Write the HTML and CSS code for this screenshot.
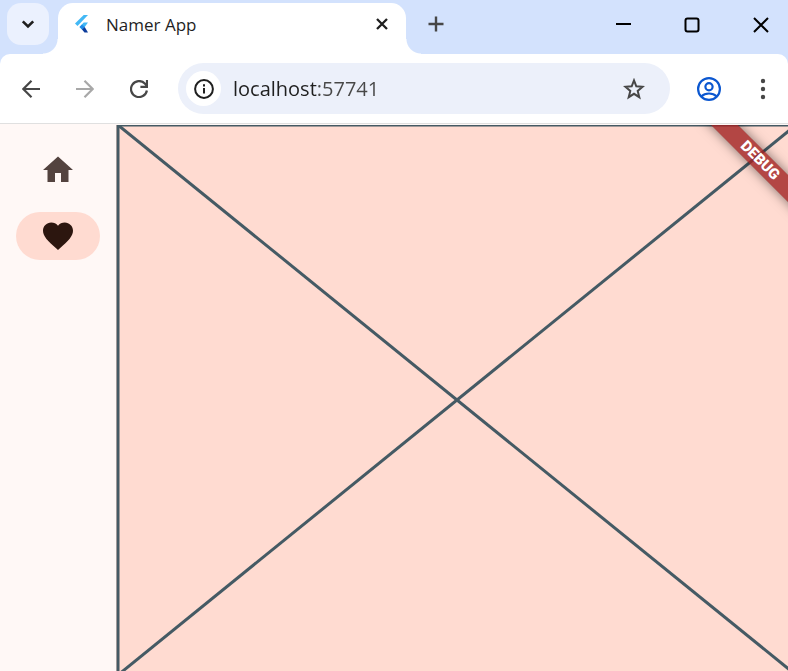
FILE: index.html
```html
<!DOCTYPE html>
<html lang="en">
<head>
<meta charset="utf-8">
<meta name="viewport" content="width=device-width, initial-scale=1">
<title>Namer App</title>
<link rel="stylesheet" href="styles.css">
</head>
<body>
<header class="tabstrip">
  <button class="tab-search" aria-label="Search tabs">
    <svg width="14" height="14" viewBox="0 0 14 14"><path d="M1.800 4.300L7 9.500l5.200-5.200" fill="none" stroke="#1f1f1f" stroke-width="2.600"/></svg>
  </button>
  <div class="tab">
    <svg width="18" height="20" viewBox="0 0 18 20">
      <path d="M3.500 12L1 9.500 9.700 1H14z" fill="#42b8f5"/>
      <path d="M14 8.500H9.700L5.500 13l3 3z" fill="#42b8f5"/>
      <path d="M5.500 13L8 10.500l2.700 2.500L8 15.500z" fill="#1f8be8"/>
      <path d="M8 15.500l2.700-2.500 3.300 5.500h-3.500z" fill="#0c3c9c"/>
    </svg>
    <span class="tab-title">Namer App</span>
    <button class="icon-button tab-close" aria-label="Close tab">
      <svg width="12" height="12" viewBox="0 0 12 12"><path d="M1 1l10 10M11 1L1 11" fill="none" stroke="#1f1f1f" stroke-width="2.300"/></svg>
    </button>
  </div>
  <button class="icon-button new-tab" aria-label="New tab">
    <svg width="16" height="16" viewBox="0 0 16 16"><path d="M8 .5v15M.5 8h15" stroke="#474747" stroke-width="2.400"/></svg>
  </button>
  <div class="window-controls">
    <button class="icon-button" aria-label="Minimize"><svg width="16" height="16" viewBox="0 0 16 16"><path d="M1 7h15" stroke="#000" stroke-width="2"/></svg></button>
    <button class="icon-button" aria-label="Maximize"><svg width="16" height="16" viewBox="0 0 16 16"><rect x="1.500" y="1.500" width="13" height="13" rx="2" fill="none" stroke="#000" stroke-width="2"/></svg></button>
    <button class="icon-button" aria-label="Close"><svg width="16" height="16" viewBox="0 0 16 16"><path d="M1 1l14 14M15 1L1 15" stroke="#000" stroke-width="2"/></svg></button>
  </div>
</header>

<nav class="toolbar" aria-label="Browser toolbar">
  <div class="history">
    <button class="icon-button" aria-label="Back"><svg width="18" height="18" viewBox="0 0 18 18"><path d="M18 9H1.500M9.500 .8L1.300 9l8.200 8.200" fill="none" stroke="#474747" stroke-width="2.200"/></svg></button>
    <button class="icon-button" aria-label="Forward" disabled><svg width="18" height="18" viewBox="0 0 18 18"><path d="M0 9h16.500M8.500 .8L16.700 9l-8.200 8.200" fill="none" stroke="#a8a8a8" stroke-width="2.200"/></svg></button>
    <button class="icon-button" aria-label="Reload"><svg width="18" height="18" viewBox="0 0 18 18"><path d="M16.900 10.500A8 8 0 1 1 14.800 3.500L17 6M17 0v6.800h-6.600" fill="none" stroke="#474747" stroke-width="2.200"/></svg></button>
  </div>
  <div class="omnibox">
    <button class="icon-button site-info" aria-label="View site information">
      <svg width="20" height="20" viewBox="0 0 20 20"><circle cx="10" cy="10" r="8.900" fill="none" stroke="#1f1f1f" stroke-width="2"/><path d="M10 9v5.500M10 5.300v2.200" stroke="#1f1f1f" stroke-width="2"/></svg>
    </button>
    <input class="url" type="text" aria-label="Address" value="localhost:57741">
    <button class="icon-button bookmark" aria-label="Bookmark this tab">
      <svg width="22" height="22" viewBox="0 0 22 22"><path d="M11 2.400l2.300 5.900 6.300.5-4.900 4.100 1.600 6.300L11 15.800l-5.300 3.400 1.600-6.300-4.900-4.100 6.300-.5z" fill="none" stroke="#474747" stroke-width="2"/></svg>
    </button>
  </div>
  <button class="icon-button profile" aria-label="Profile">
    <svg width="24" height="24" viewBox="0 0 24 24" fill="none" stroke="#0b57d0" stroke-width="2.200"><circle cx="12" cy="12" r="10.900"/><circle cx="12" cy="9.700" r="3.600"/><path d="M4.300 19.500c4-4 11.400-4 15.400 0"/></svg>
  </button>
  <button class="icon-button menu" aria-label="Menu">
    <svg width="6" height="22" viewBox="0 0 6 22" fill="#474747"><circle cx="3" cy="3" r="2.200"/><circle cx="3" cy="11" r="2.200"/><circle cx="3" cy="19" r="2.200"/></svg>
  </button>
</nav>

<div class="app">
  <nav class="rail" aria-label="Navigation">
    <button class="destination" aria-label="Home">
      <svg width="36" height="36" viewBox="0 0 24 24"><path d="M10 20v-6h4v6h5v-8h3L12 3 2 12h3v8z" fill="#53433f"/></svg>
    </button>
    <button class="destination selected" aria-label="Favorites" aria-current="page">
      <svg width="36" height="36" viewBox="0 0 24 24"><path d="M12 21.350l-1.450-1.320C5.400 15.360 2 12.280 2 8.500 2 5.420 4.420 3 7.500 3c1.740 0 3.410.810 4.500 2.090C13.090 3.810 14.760 3 16.500 3 19.580 3 22 5.420 22 8.500c0 3.780-3.400 6.860-8.550 11.540z" fill="#2c160f"/></svg>
    </button>
  </nav>
  <main class="page">
    <svg class="placeholder" aria-hidden="true">
      <rect width="100%" height="100%"/>
      <line x1="0" y1="0" x2="100%" y2="100%"/>
      <line x1="100%" y1="0" x2="0" y2="100%"/>
    </svg>
    <div class="debug-banner">DEBUG</div>
  </main>
</div>
</body>
</html>
```

FILE: styles.css
```css
* {
  box-sizing: border-box;
}

body {
  margin: 0;
  height: 100vh;
  display: flex;
  flex-direction: column;
  overflow: hidden;
  background: #d3e2fd;
  font-family: "Open Sans", "Noto Sans", sans-serif;
  color: #1f1f1f;
}

button {
  display: flex;
  align-items: center;
  justify-content: center;
  padding: 0;
  border: 0;
  background: none;
}

svg {
  display: block;
  flex: none;
}

.tabstrip {
  display: flex;
  flex: none;
  height: 54px;
  padding-left: 7px;
}

.tab-search {
  width: 42px;
  height: 42px;
  margin-top: 3px;
  border-radius: 14px;
  background: #ebf1fe;
}

.tab {
  position: relative;
  display: flex;
  align-items: center;
  flex: 0 1 348px;
  height: 51px;
  margin: 3px 0 0 9px;
  padding: 0 18px 10px 16px;
  border-radius: 15px 15px 0 0;
  background: #fff;
}

/* Curved feet that join the tab to the toolbar */
.tab::before,
.tab::after {
  content: "";
  position: absolute;
  bottom: 0;
  width: 15px;
  height: 15px;
}

.tab::before {
  right: 100%;
  background: radial-gradient(circle at 0 0, transparent 14px, #fff 15px);
}

.tab::after {
  left: 100%;
  background: radial-gradient(circle at 100% 0, transparent 14px, #fff 15px);
}

.tab-title {
  flex: 1;
  margin-left: 14px;
  padding-top: 2px;
  font-size: 17px;
  line-height: 24px;
  white-space: nowrap;
}

.new-tab {
  width: 32px;
  height: 48px;
  margin-left: 14px;
}

.window-controls {
  display: flex;
  gap: 53px;
  height: 50px;
  margin-left: auto;
  padding-right: 19px;
}

.toolbar {
  display: flex;
  align-items: center;
  flex: none;
  height: 70px;
  padding: 0 22px;
  border-bottom: 1px solid #e0e0e0;
  border-radius: 10px 10px 0 0;
  background: #fff;
}

.history {
  display: flex;
  gap: 36px;
}

.omnibox {
  display: flex;
  align-items: center;
  flex: 1;
  min-width: 0;
  height: 51px;
  margin-left: 30px;
  padding: 0 25px 0 8px;
  border-radius: 26px;
  background: #ecf0fa;
}

.site-info {
  flex: none;
  width: 35px;
  height: 35px;
  border-radius: 50%;
  background: #fff;
}

/* The host is drawn darker than the port */
.url {
  flex: 1;
  min-width: 0;
  margin-left: 12px;
  padding: 0;
  border: 0;
  outline: 0;
  background: linear-gradient(90deg, #1f1f1f 84px, #474747 84px);
  background-clip: text;
  -webkit-background-clip: text;
  color: transparent;
  caret-color: #1f1f1f;
  font-family: inherit;
  font-size: 20px;
  line-height: 28px;
}

.profile {
  margin-left: 27px;
}

.menu {
  margin: 0 0 0 39px;
}

.app {
  display: flex;
  flex: 1;
  min-height: 0;
  padding-top: 1px;
  background: #fff8f6;
}

.rail {
  display: flex;
  flex-direction: column;
  gap: 18px;
  flex: none;
  width: 116px;
  padding: 21px 16px;
}

.destination {
  height: 48px;
  border-radius: 24px;
}

.destination.selected {
  background: #ffdbd1;
}

.page {
  position: relative;
  flex: 1;
  min-width: 0;
  overflow: hidden;
  background: #ffdbd1;
}

/* The placeholder runs slightly past the right and bottom of the window */
.placeholder {
  width: calc(100% + 6px);
  height: calc(100% + 4px);
  margin-left: 2px;
  overflow: visible;
  fill: none;
  stroke: #455a64;
  stroke-width: 3px;
}

.debug-banner {
  position: absolute;
  top: 26px;
  right: -42px;
  width: 140px;
  height: 19px;
  transform: rotate(45deg);
  background: rgba(160, 32, 32, 0.8);
  box-shadow: 0 0 12px rgba(0, 0, 0, 0.5);
  color: #fff;
  font: 900 15px/19px Roboto, sans-serif;
  text-align: center;
}
```
